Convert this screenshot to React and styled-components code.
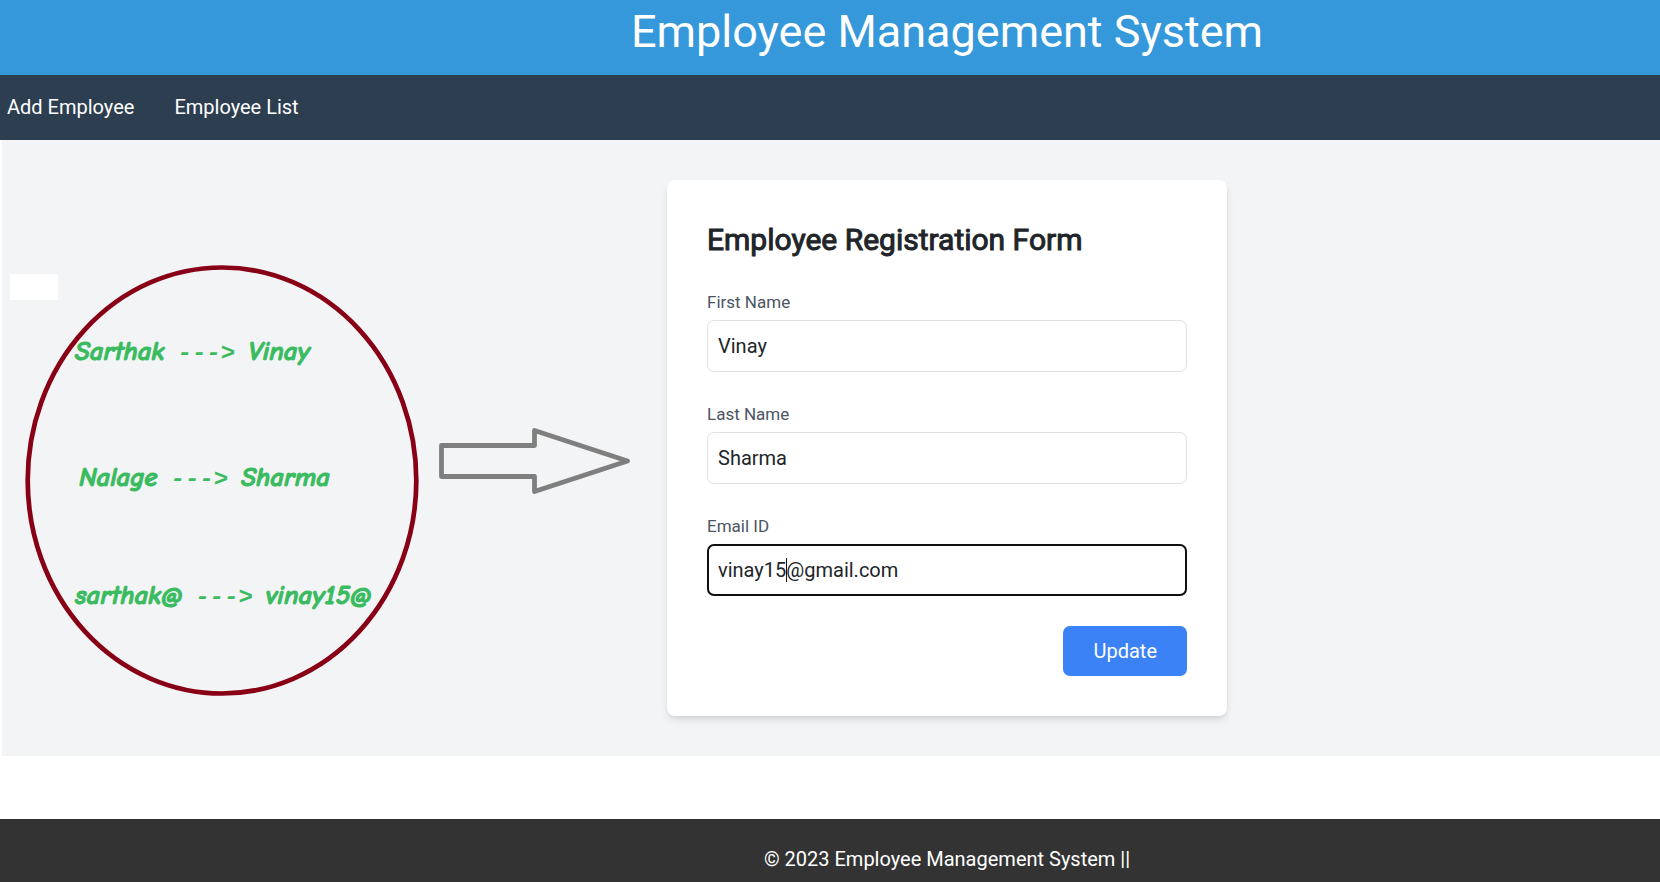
import React from "react";
import styled, { createGlobalStyle, css } from "styled-components";

const GlobalStyle = createGlobalStyle`
  *, *::before, *::after { box-sizing: border-box; }
  body {
    margin: 0;
    background: #ffffff;
    color: #212529;
    font-family: Roboto, "Liberation Sans", sans-serif;
    font-size: 20px;
    line-height: 30px;
  }
`;

/* The page's content is centred to the right of this gutter. */
const gutter = css`
  padding-left: 234px;
`;

const Page = styled.div`
  display: flex;
  flex-direction: column;
  min-height: 100vh;
`;

const Header = styled.header`
  ${gutter}
  padding-top: 5px;
  padding-bottom: 16px;
  background: #3498db;
  color: #ffffff;
  text-align: center;
`;

const Title = styled.h1`
  margin: 0;
  font-size: 45px;
  font-weight: 400;
  line-height: 54px;
`;

const Nav = styled.nav`
  display: flex;
  align-items: center;
  gap: 40px;
  padding: 17px 7px 18px;
  background: #2c3e50;
`;

const NavLink = styled.a`
  color: #ffffff;
  text-decoration: none;
`;

const Main = styled.main`
  position: relative;
  padding-left: 2px;
  margin-bottom: 63px;
`;

const Backdrop = styled.div`
  display: flex;
  justify-content: center;
  padding: 40px 0 40px 232px;
  background: #f3f4f6;
`;

const Card = styled.form`
  display: flex;
  flex-direction: column;
  gap: 30px;
  width: 100%;
  max-width: 560px;
  padding: 40px;
  border-radius: 8px;
  background: #ffffff;
  box-shadow: 0 5px 8px -1px rgba(0, 0, 0, 0.1), 0 2px 5px -2px rgba(0, 0, 0, 0.1);
`;

const CardTitle = styled.h2`
  margin: 0;
  font-size: 30px;
  font-weight: 400;
  line-height: 40px;
  -webkit-text-stroke: 1px currentColor;
`;

const Field = styled.div`
  display: flex;
  flex-direction: column;
  gap: 5px;
`;

const Label = styled.label`
  color: #4b5563;
  font-size: 17px;
  line-height: 25px;
`;

const InputBox = styled.div`
  position: relative;
  display: flex;
`;

const Input = styled.input`
  width: 100%;
  height: 52px;
  padding: 0 10px;
  border: 1px solid #dee2e6;
  border-radius: 7px;
  background: #ffffff;
  color: #212529;
  font: inherit;
  outline: ${(p) => (p.$active ? "2px solid #101010" : "none")};
  outline-offset: -2px;
`;

const Caret = styled.span`
  position: absolute;
  top: 14px;
  left: 79px;
  width: 1px;
  height: 24px;
  background: #101010;
`;

const SubmitButton = styled.button`
  align-self: flex-end;
  padding: 10px 30px;
  border: 0;
  border-radius: 7px;
  background: #3b82f6;
  color: #ffffff;
  font: inherit;
`;

const Footer = styled.footer`
  ${gutter}
  margin-top: auto;
  padding-top: 25px;
  padding-bottom: 8px;
  background: #333333;
  color: #ffffff;
  text-align: center;
`;

/* Hand-made marks laid over the page. */
const Marks = styled.div`
  position: absolute;
  top: 0;
  left: 0;
  pointer-events: none;
`;

const Drawing = styled.svg`
  display: block;
`;

const Note = styled.div`
  position: absolute;
  top: ${(p) => p.$top}px;
  left: ${(p) => p.$left}px;
  display: flex;
  align-items: baseline;
  gap: 13px;
  color: #3abb60;
  font-family: "Comic Sans MS", "Comic Neue", Lato, sans-serif;
  font-size: 27px;
  font-style: italic;
  font-weight: 700;
  line-height: 30px;
  white-space: nowrap;
  -webkit-text-stroke: 1px currentColor;
`;

const NoteArrow = styled.span`
  font-family: "Liberation Mono", monospace;
  font-size: 24px;
  -webkit-text-stroke: 0;
`;

const fields = [
  { id: "firstName", label: "First Name", value: "Vinay" },
  { id: "lastName", label: "Last Name", value: "Sharma" },
  { id: "emailId", label: "Email ID", value: "vinay15@gmail.com", active: true },
];

const notes = [
  { from: "Sarthak", to: "Vinay", top: 197, left: 75 },
  { from: "Nalage", to: "Sharma", top: 323, left: 79 },
  { from: "sarthak@", to: "vinay15@", top: 441, left: 75 },
];

export default function App() {
  return (
    <>
      <GlobalStyle />
      <Page>
        <Header>
          <Title>Employee Management System</Title>
        </Header>
        <Nav>
          <NavLink href="#add">Add Employee</NavLink>
          <NavLink href="#list">Employee List</NavLink>
        </Nav>
        <Main>
          <Backdrop>
            <Card onSubmit={(e) => e.preventDefault()}>
              <CardTitle>Employee Registration Form</CardTitle>
              {fields.map((f) => (
                <Field key={f.id}>
                  <Label htmlFor={f.id}>{f.label}</Label>
                  <InputBox>
                    <Input id={f.id} type="text" defaultValue={f.value} $active={f.active} />
                    {f.active && <Caret />}
                  </InputBox>
                </Field>
              ))}
              <SubmitButton type="submit">Update</SubmitButton>
            </Card>
          </Backdrop>
          <Marks>
            <Drawing width="640" height="570" viewBox="0 0 640 570" fill="none" aria-hidden="true">
              <rect x="10" y="134" width="48" height="26" fill="#ffffff" />
              <ellipse cx="222" cy="340.5" rx="194.3" ry="213" stroke="#880015" strokeWidth="4.7" />
              <path
                d="M441.5 305.5H534.5V290.5L627.5 321L534.5 351.5V336.5H441.5Z"
                stroke="#7f7f7f"
                strokeWidth="4.8"
                strokeLinejoin="round"
              />
            </Drawing>
            {notes.map((n) => (
              <Note key={n.from} $top={n.top} $left={n.left}>
                <span>{n.from}</span>
                <NoteArrow>{"--->"}</NoteArrow>
                <span>{n.to}</span>
              </Note>
            ))}
          </Marks>
        </Main>
        <Footer>© 2023 Employee Management System ||</Footer>
      </Page>
    </>
  );
}
